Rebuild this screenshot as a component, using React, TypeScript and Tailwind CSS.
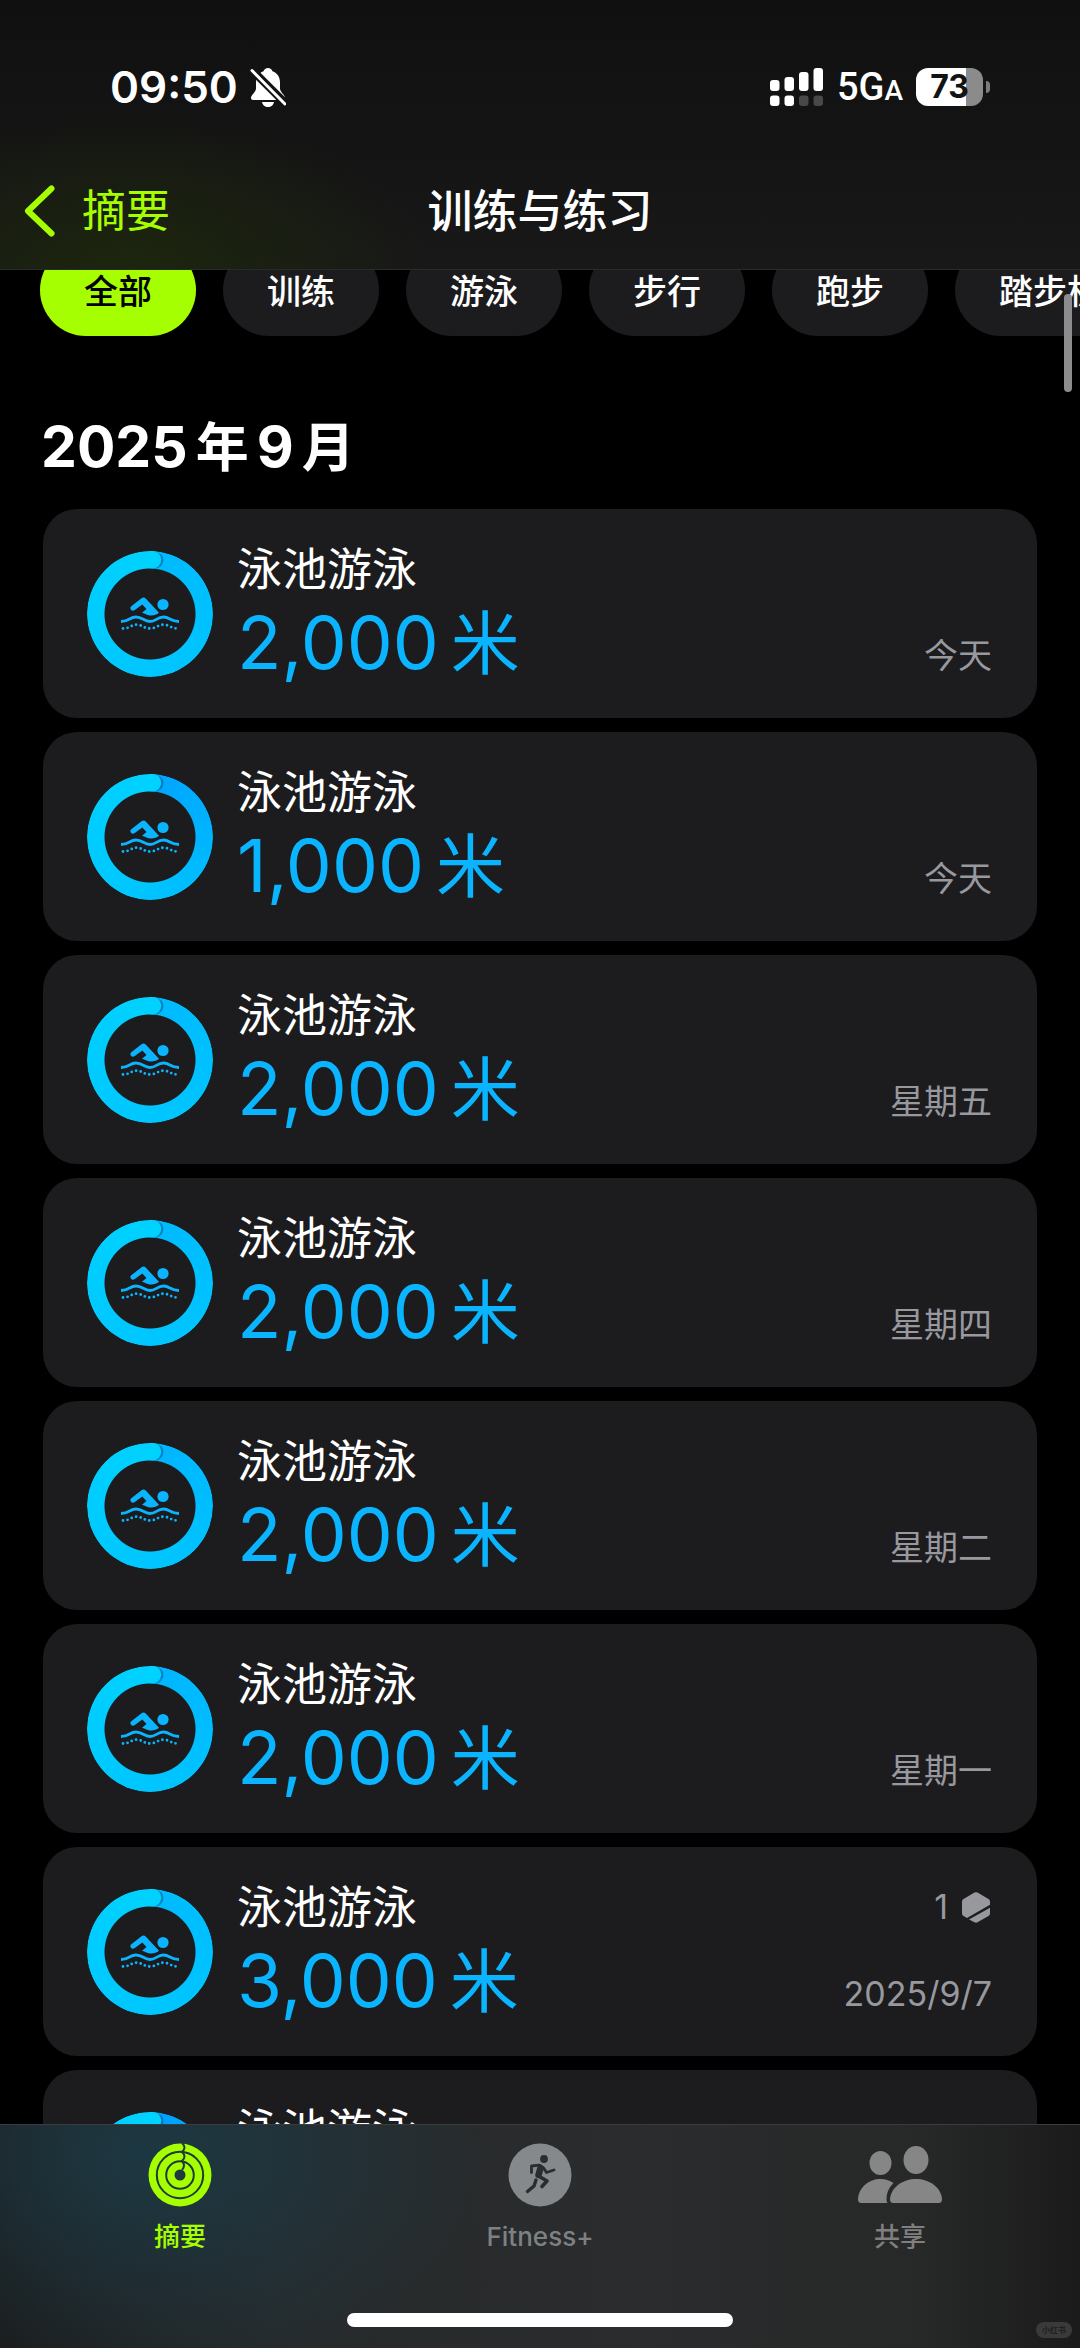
import React from 'react';

type Workout = { amount: string; date: string; awards?: number; start: string };

const filters = ['全部', '训练', '游泳', '步行', '跑步', '踏步机'];

const workouts: Workout[] = [
  { amount: '2,000', date: '今天', start: '#00bbff' },
  { amount: '1,000', date: '今天', start: '#00a6ff' },
  { amount: '2,000', date: '星期五', start: '#00bbff' },
  { amount: '2,000', date: '星期四', start: '#00bbff' },
  { amount: '2,000', date: '星期二', start: '#00b6ff' },
  { amount: '2,000', date: '星期一', start: '#00b6ff' },
  { amount: '3,000', date: '2025/9/7', awards: 1, start: '#00bbff' },
  { amount: '1,000', date: '2025/9/6', start: '#00a0ff' },
];

function BellOff() {
  return (
    <svg viewBox="0 0 36 40" className="h-10 w-9" aria-label="静音" role="img">
      <g fill="#fff">
        <path d="M18 1c-2.200 0-4 1.400-4.500 3.200C8.500 6 6 10 6 15.500v6c0 3.500-5 6.500-5 9.500 0 1.300.8 2 2.200 2h29.600c1.400 0 2.200-.7 2.200-2 0-3-5-6-5-9.500v-6C30 10 27.500 6 22.500 4.200 22 2.400 20.200 1 18 1z" />
        <path d="M12 35h12c-.5 3-3 5-6 5s-5.500-2-6-5z" />
      </g>
      <path d="M0 1l37 37" stroke="#131313" strokeWidth="8" />
      <path d="M2 3.500l33 33.500" stroke="#fff" strokeWidth="3" strokeLinecap="round" />
    </svg>
  );
}

function Signal() {
  return (
    <svg viewBox="0 0 54 38" className="h-[38px] w-[54px]" aria-label="信号" role="img">
      <g fill="#fff">
        <rect x="0" y="12" width="9.500" height="11" rx="3" />
        <rect x="14.500" y="9" width="9.500" height="14" rx="3" />
        <rect x="29" y="4" width="9.500" height="19" rx="3" />
        <rect x="43.500" y="0" width="9.500" height="23" rx="3" />
        <rect x="0" y="27.500" width="9.500" height="10.500" rx="3" />
        <rect x="14.500" y="27.500" width="9.500" height="10.500" rx="3" />
      </g>
      <g fill="#484848">
        <rect x="29" y="27.500" width="9.500" height="10.500" rx="3" />
        <rect x="43.500" y="27.500" width="9.500" height="10.500" rx="3" />
      </g>
    </svg>
  );
}

function Swimmer() {
  return (
    <svg viewBox="0 0 58 34" className="absolute h-[34px] w-[58px]" aria-hidden="true">
      <g fill="#0ab4ff">
        <circle cx="42" cy="7.500" r="5.600" />
        <path d="M10 9.500 20.500 1.300c1.500-1.100 3-.9 4.200.3L38 15.800c-3 2.600-7.500 3.400-11 2.200-2.500-.9-4-1.800-6-2.300l4.500-3.700-4.200-4.600-7.500 5.600c-1.500 1-3 .8-3.800-.3-.9-1.200-.8-2.400 0-3.200z" />
      </g>
      <path
        d="M0 24.500c8.500 0 8.500-4.500 15-4.500S23 24.500 29 24.500 36 20 42.500 20 49 24.500 58 24.500"
        fill="none"
        stroke="#0ab4ff"
        strokeWidth="2.800"
      />
      <path
        d="M2 31.500c7 0 8-3.800 13.500-3.800S23 31.500 29 31.500s8-3.800 13.500-3.800S50 31.500 57 31.500"
        fill="none"
        stroke="#0ab4ff"
        strokeWidth="2.800"
        strokeLinecap="round"
        strokeDasharray="0 4.600"
      />
    </svg>
  );
}

function Ring({ start }: { start: string }) {
  return (
    <div className="relative flex size-[126px] shrink-0 items-center justify-center">
      <div
        className="absolute inset-0 rounded-full [mask:radial-gradient(circle,transparent_45px,#000_46px)]"
        style={{ backgroundImage: `conic-gradient(from 8deg, ${start}, #00c8ff 55%, #00d2ff)` }}
      />
      <svg viewBox="0 0 126 126" className="absolute inset-0" aria-hidden="true">
        <path d="M68 0.500q8 1 8.500 8.500-.5 7.500-8.500 8.800z" fill="#005a8c" opacity="0.550" />
        <path d="M63 0h3a8.200 8.600 0 0 1 0 17.200h-3z" fill="#00d2ff" />
      </svg>
      <Swimmer />
    </div>
  );
}

function Award() {
  return (
    <svg viewBox="0 0 28 31" className="mr-0.5 h-[31px] w-7" aria-label="奖章" role="img">
      <g fill="#98989f">
        <path d="M12.500.6q1.500-.8 3 0L26.500 7Q28 7.800 28 9.500v3.300L5 26 1.500 24Q0 23.200 0 21.500v-12Q0 7.800 1.500 7z" />
        <path d="M28 15.800v5.700q0 1.700-1.500 2.500l-11 6.300q-1.500.8-3 0L7 27.500z" />
      </g>
    </svg>
  );
}

function WorkoutCard({ workout }: { workout: Workout }) {
  return (
    <li className="flex h-[209px] shrink-0 rounded-[34px] bg-[#1c1c1e] pr-[45px] pl-11">
      <div className="flex flex-1 items-center gap-6">
        <Ring start={workout.start} />
        <div className="flex flex-1 flex-col self-start pt-[33px]">
          <h3 className="text-[45px] leading-[56px] text-white">泳池游泳</h3>
          <p className="flex items-baseline gap-3 text-[#0ab4ff]">
            <span className="text-[73px] leading-[90px]">{workout.amount}</span>
            <span className="text-[69px] leading-[90px]">米</span>
          </p>
        </div>
      </div>
      <div className="flex flex-col items-end justify-between pt-[38px] pb-10 text-[34px] leading-[44px] text-[#98989f]">
        <span className="flex items-center gap-[14px]">
          {workout.awards ? (
            <>
              {workout.awards}
              <Award />
            </>
          ) : null}
        </span>
        <time>{workout.date}</time>
      </div>
    </li>
  );
}

function RingsIcon() {
  return (
    <svg viewBox="0 0 64 64" className="size-16" aria-hidden="true">
      <circle cx="32" cy="32" r="31.500" fill="#a6ff00" />
      <g fill="none" stroke="#1f3a3c" strokeWidth="2">
        <circle cx="32" cy="32" r="23.200" />
        <circle cx="32" cy="32" r="13.800" />
        <path d="M34 0q5 4.500 0 9 5 4.500 0 9 4 4.500 0 9" />
      </g>
      <circle cx="32" cy="32" r="5.500" fill="#1f3a3c" />
    </svg>
  );
}

function RunnerIcon() {
  return (
    <svg viewBox="0 0 64 64" className="size-16" aria-hidden="true">
      <circle cx="32" cy="32" r="31.500" fill="#86898b" />
      <circle cx="36" cy="16" r="3.900" fill="#292d2f" />
      <g fill="none" stroke="#292d2f" strokeLinecap="round" strokeLinejoin="round">
        <path d="M23.500 29.500V23l8-.8 4.500 3.300 2.500 4 7.500-2.500" strokeWidth="2.800" />
        <path d="M32.500 25l-2 7" strokeWidth="6.500" />
        <path d="M30.500 33l8.500 5-5 5.500" strokeWidth="3.600" />
        <path d="M28 37l-2 6-6.500 5.500" strokeWidth="3.400" />
      </g>
    </svg>
  );
}

function PeopleIcon() {
  return (
    <svg viewBox="0 0 84 58" className="h-[58px] w-[84px]" aria-hidden="true">
      <g fill="#868686">
        <ellipse cx="22.500" cy="17" rx="11" ry="12" />
        <ellipse cx="58" cy="14" rx="12.500" ry="14" />
        <path d="M3 57q-3 0-3-4C1 41 11 33 22.500 33q7 0 13 4-7 7-7 16 0 3 1 4z" />
        <path d="M35 57q-3 0-3-4c1-12 13-20 26-20s25 8 26 20q0 4-3 4z" />
      </g>
    </svg>
  );
}

const tabs = [
  { label: '摘要', icon: <RingsIcon />, tone: 'text-[#a6ff00]' },
  { label: 'Fitness+', icon: <RunnerIcon />, tone: 'text-[#7e8183]' },
  { label: '共享', icon: <PeopleIcon />, tone: 'text-[#7f7f80]' },
];

export default function App() {
  return (
    <div className="relative flex h-screen flex-col overflow-hidden bg-black font-['Inter','Noto_Sans_CJK_SC',sans-serif] text-white">
      <header className="h-[270px] shrink-0 border-b border-[#2a2a2b] bg-[radial-gradient(ellipse_300px_160px_at_130px_270px,#1c260d,transparent),linear-gradient(#101010,#181818)]">
        <div className="flex h-[174px] items-center justify-between pr-[90px] pl-[110px]">
          <div className="flex items-center gap-3">
            <time className="text-[44px] leading-none font-semibold">09:50</time>
            <BellOff />
          </div>
          <div className="flex items-center gap-[13px]">
            <Signal />
            <span className="font-['Roboto',sans-serif] text-[38px] leading-none font-medium">
              5G<span className="text-[28px]">A</span>
            </span>
            <div className="flex items-center gap-[3px]">
              <div className="flex h-[38px] w-[67px] items-center justify-center rounded-xl bg-linear-to-r from-white from-75% to-[#8b8b8b] to-75% text-[32px] font-bold text-[#131313]">
                73
              </div>
              <div className="h-3 w-1 rounded-r-full bg-[#7b7b7b]" />
            </div>
          </div>
        </div>
        <nav className="grid h-[74px] grid-cols-[1fr_auto_1fr] items-center px-6">
          <button className="flex items-center gap-[27px] text-[44px] leading-none text-[#a6ff00]">
            <svg viewBox="0 0 31 52" className="h-[52px] w-[31px]" aria-hidden="true">
              <path d="M27.500 3.500 4 26l23.500 22.500" fill="none" stroke="#a6ff00" strokeWidth="6" strokeLinecap="round" strokeLinejoin="round" />
            </svg>
            摘要
          </button>
          <h1 className="text-[45px] leading-none font-medium">训练与练习</h1>
        </nav>
      </header>

      <main className="flex min-h-0 flex-1 flex-col overflow-hidden">
        <div className="-mt-[26px] flex shrink-0 gap-[27px] overflow-hidden pl-10 [clip-path:inset(26px_0_0_0)]">
          {filters.map((label, i) => (
            <button
              key={label}
              className={
                i === 0
                  ? 'h-[92px] shrink-0 rounded-full bg-[#a6ff00] px-11 pt-1 text-[34px] leading-none font-medium text-black'
                  : 'h-[92px] shrink-0 rounded-full bg-[#1c1c1e] px-11 pt-1 text-[34px] leading-none font-medium text-white'
              }
            >
              {label}
            </button>
          ))}
        </div>
        <h2 className="mt-[73px] flex shrink-0 items-baseline gap-2 pl-[41px] text-[57px] leading-[76px] font-bold">
          2025<span className="text-[53px]">年</span>9<span className="text-[53px]">月</span>
        </h2>
        <ul className="mt-[23px] flex flex-col gap-[14px] px-[43px]">
          {workouts.map((workout, i) => (
            <WorkoutCard key={i} workout={workout} />
          ))}
        </ul>
      </main>

      <div className="absolute top-[294px] right-2 h-[98px] w-2 rounded-full bg-[#8c8c8c]" />

      <footer className="relative flex h-[224px] shrink-0 flex-col items-center border-t border-[#3a3c3d] bg-[radial-gradient(ellipse_340px_240px_at_150px_30px,#1d3843,transparent),linear-gradient(90deg,#1b1b1b,#272a2b_25%,#2a2c2d_60%,#272828_85%,#1b1b1b)]">
        <nav className="grid h-[188px] w-full shrink-0 grid-cols-3">
          {tabs.map((tab) => (
            <button key={tab.label} className={`flex flex-col items-center gap-3 pt-[18px] text-[26px] leading-[36px] font-medium ${tab.tone}`}>
              <span className="flex h-16 shrink-0 items-center">{tab.icon}</span>
              {tab.label}
            </button>
          ))}
        </nav>
        <div className="h-[14px] w-[386px] rounded-full bg-white" />
        <span className="absolute right-2 bottom-[10px] rounded-full bg-[#3a3a3a] px-1.5 text-[8px] leading-[16px] font-bold text-[#1f1f1f]">小红书</span>
      </footer>
    </div>
  );
}
